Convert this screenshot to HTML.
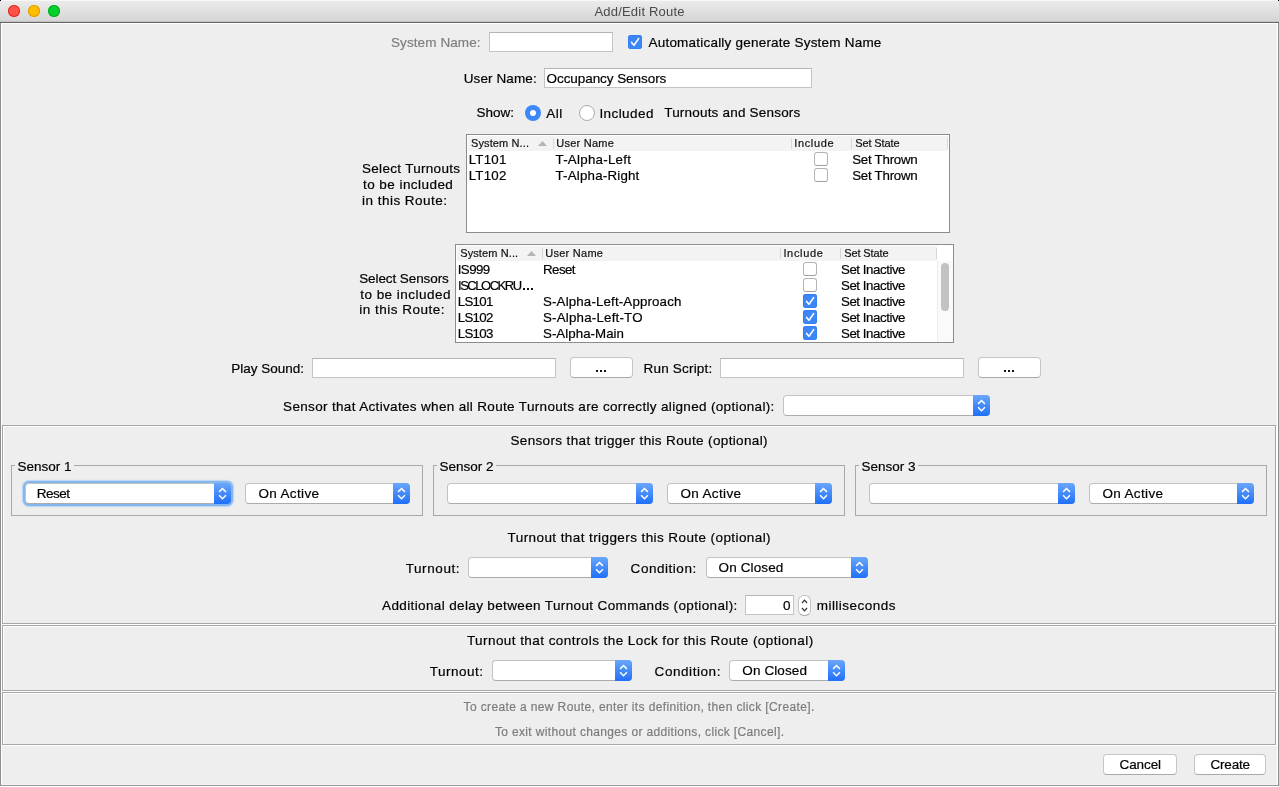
<!DOCTYPE html>
<html><head><meta charset="utf-8"><title>Add/Edit Route</title>
<style>
html,body{margin:0;padding:0;}
body{width:1279px;height:787px;overflow:hidden;background:#eeeeee;position:relative;font-family:"Liberation Sans",sans-serif;}
.t{position:absolute;white-space:pre;line-height:20px;-webkit-text-stroke:0.2px currentColor;}
</style></head><body>
<div style="position:absolute;left:0px;top:0px;width:1279px;height:22px;background:linear-gradient(#ececec,#d4d4d4);"></div>
<div style="position:absolute;left:0px;top:0px;width:1279px;height:1px;background:#f6f6f6;"></div>
<div style="position:absolute;left:0px;top:21px;width:1279px;height:1px;background:#c2c2c2;"></div>
<div style="position:absolute;left:0px;top:22px;width:1279px;height:1px;background:#666666;"></div>
<div style="position:absolute;left:0px;top:23px;width:1279px;height:1px;background:#ffffff;"></div>
<div style="position:absolute;left:0px;top:23px;width:1px;height:763px;background:#8e8e8e;"></div>
<div style="position:absolute;left:1px;top:23px;width:1px;height:762px;background:#ffffff;"></div>
<div style="position:absolute;left:1278px;top:23px;width:1px;height:763px;background:#8e8e8e;"></div>
<div style="position:absolute;left:1277px;top:23px;width:1px;height:762px;background:#ffffff;"></div>
<div style="position:absolute;left:0px;top:785px;width:1279px;height:1px;background:#979797;"></div>
<div style="position:absolute;left:1px;top:784px;width:1277px;height:1px;background:#f4f4f4;"></div>
<div style="position:absolute;left:0px;top:786px;width:1279px;height:1px;background:#ffffff;"></div>
<div style="position:absolute;left:0px;top:0px;width:1px;height:1px;background:#000;"></div>
<div style="position:absolute;left:1278px;top:0px;width:1px;height:1px;background:#000;"></div>
<div style="position:absolute;left:8px;top:5px;width:12px;height:12px;border-radius:50%;background:#ff5147;box-shadow:inset 0 0 0 1px #e2291f;"></div>
<div style="position:absolute;left:28px;top:5px;width:12px;height:12px;border-radius:50%;background:#ffbd00;box-shadow:inset 0 0 0 1px #e09d00;"></div>
<div style="position:absolute;left:48px;top:5px;width:12px;height:12px;border-radius:50%;background:#00cf2c;box-shadow:inset 0 0 0 1px #00ad22;"></div>
<div style="position:absolute;left:489px;top:32px;width:124px;height:20px;box-sizing:border-box;background:#fff;border:1px solid #c4c4c4;border-top-color:#b5b5b5;"></div>
<div style="position:absolute;left:628px;top:35px;width:14px;height:14px;border-radius:3px;background:#3c86f7;box-shadow:inset 0 0 0 0.5px #2f78ee;"></div>
<svg style="position:absolute;left:628px;top:35px" width="14" height="14" viewBox="0 0 14 14"><path d="M3.6 7.4 L6 10.2 L10.6 3.6" fill="none" stroke="#fff" stroke-width="1.6" stroke-linecap="round" stroke-linejoin="round"/></svg>
<div style="position:absolute;left:544px;top:68px;width:268px;height:20px;box-sizing:border-box;background:#fff;border:1px solid #c4c4c4;border-top-color:#b5b5b5;"></div>
<div style="position:absolute;left:525px;top:105px;width:16px;height:16px;border-radius:50%;background:#3d88f8;"></div>
<div style="position:absolute;left:530px;top:110px;width:6px;height:6px;border-radius:50%;background:#fff;"></div>
<div style="position:absolute;left:579px;top:105px;width:16px;height:16px;box-sizing:border-box;border-radius:50%;background:#fff;border:1px solid #acacac;"></div>
<div style="position:absolute;left:466px;top:134px;width:484px;height:99px;box-sizing:border-box;background:#fff;border:1px solid #8c8c8c;"></div>
<div style="position:absolute;left:468px;top:136px;width:480px;height:15px;background:#f3f3f3;"></div>
<div style="position:absolute;left:553px;top:138px;width:1px;height:11px;background:#d8d8d8;"></div>
<div style="position:absolute;left:791px;top:138px;width:1px;height:11px;background:#d8d8d8;"></div>
<div style="position:absolute;left:851px;top:138px;width:1px;height:11px;background:#d8d8d8;"></div>
<div style="position:absolute;left:947px;top:138px;width:1px;height:11px;background:#d8d8d8;"></div>
<svg style="position:absolute;left:537px;top:140px" width="11" height="7" viewBox="0 0 11 7"><path d="M1 6 L5.5 1 L10 6 Z" fill="#b4b4b4"/></svg>
<div style="position:absolute;left:814px;top:152px;width:14px;height:14px;box-sizing:border-box;border-radius:3px;background:#fff;border:1px solid #b4b4b4;border-bottom-color:#a0a0a0;"></div>
<div style="position:absolute;left:814px;top:168px;width:14px;height:14px;box-sizing:border-box;border-radius:3px;background:#fff;border:1px solid #b4b4b4;border-bottom-color:#a0a0a0;"></div>
<div style="position:absolute;left:455px;top:244px;width:499px;height:99px;box-sizing:border-box;background:#fff;border:1px solid #8c8c8c;"></div>
<div style="position:absolute;left:457px;top:246px;width:480px;height:15px;background:#f3f3f3;"></div>
<div style="position:absolute;left:542px;top:248px;width:1px;height:11px;background:#d8d8d8;"></div>
<div style="position:absolute;left:780px;top:248px;width:1px;height:11px;background:#d8d8d8;"></div>
<div style="position:absolute;left:840px;top:248px;width:1px;height:11px;background:#d8d8d8;"></div>
<div style="position:absolute;left:936px;top:248px;width:1px;height:11px;background:#d8d8d8;"></div>
<svg style="position:absolute;left:526px;top:250px" width="11" height="7" viewBox="0 0 11 7"><path d="M1 6 L5.5 1 L10 6 Z" fill="#b4b4b4"/></svg>
<div style="position:absolute;left:803px;top:262px;width:14px;height:14px;box-sizing:border-box;border-radius:3px;background:#fff;border:1px solid #b4b4b4;border-bottom-color:#a0a0a0;"></div>
<div style="position:absolute;left:523px;top:288px;width:2px;height:2px;background:#111;"></div>
<div style="position:absolute;left:527px;top:288px;width:2px;height:2px;background:#111;"></div>
<div style="position:absolute;left:531px;top:288px;width:2px;height:2px;background:#111;"></div>
<div style="position:absolute;left:803px;top:278px;width:14px;height:14px;box-sizing:border-box;border-radius:3px;background:#fff;border:1px solid #b4b4b4;border-bottom-color:#a0a0a0;"></div>
<div style="position:absolute;left:803px;top:294px;width:14px;height:14px;border-radius:3px;background:#3c86f7;box-shadow:inset 0 0 0 0.5px #2f78ee;"></div>
<svg style="position:absolute;left:803px;top:294px" width="14" height="14" viewBox="0 0 14 14"><path d="M3.6 7.4 L6 10.2 L10.6 3.6" fill="none" stroke="#fff" stroke-width="1.6" stroke-linecap="round" stroke-linejoin="round"/></svg>
<div style="position:absolute;left:803px;top:310px;width:14px;height:14px;border-radius:3px;background:#3c86f7;box-shadow:inset 0 0 0 0.5px #2f78ee;"></div>
<svg style="position:absolute;left:803px;top:310px" width="14" height="14" viewBox="0 0 14 14"><path d="M3.6 7.4 L6 10.2 L10.6 3.6" fill="none" stroke="#fff" stroke-width="1.6" stroke-linecap="round" stroke-linejoin="round"/></svg>
<div style="position:absolute;left:803px;top:326px;width:14px;height:14px;border-radius:3px;background:#3c86f7;box-shadow:inset 0 0 0 0.5px #2f78ee;"></div>
<svg style="position:absolute;left:803px;top:326px" width="14" height="14" viewBox="0 0 14 14"><path d="M3.6 7.4 L6 10.2 L10.6 3.6" fill="none" stroke="#fff" stroke-width="1.6" stroke-linecap="round" stroke-linejoin="round"/></svg>
<div style="position:absolute;left:937px;top:261px;width:1px;height:81px;background:#ececec;"></div>
<div style="position:absolute;left:938px;top:261px;width:15px;height:81px;background:#fafafa;"></div>
<div style="position:absolute;left:941px;top:263px;width:8px;height:48px;border-radius:4px;background:#c2c2c2;"></div>
<div style="position:absolute;left:312px;top:358px;width:244px;height:20px;box-sizing:border-box;background:#fff;border:1px solid #c4c4c4;border-top-color:#b5b5b5;"></div>
<div style="position:absolute;left:570px;top:357px;width:63px;height:21px;box-sizing:border-box;border-radius:4px;background:#fff;border:1px solid #c6c6c6;border-bottom-color:#a9a9a9;"></div>
<div style="position:absolute;left:596px;top:370px;width:2px;height:2px;background:#111;"></div>
<div style="position:absolute;left:600px;top:370px;width:2px;height:2px;background:#111;"></div>
<div style="position:absolute;left:604px;top:370px;width:2px;height:2px;background:#111;"></div>
<div style="position:absolute;left:720px;top:358px;width:244px;height:20px;box-sizing:border-box;background:#fff;border:1px solid #c4c4c4;border-top-color:#b5b5b5;"></div>
<div style="position:absolute;left:978px;top:357px;width:63px;height:21px;box-sizing:border-box;border-radius:4px;background:#fff;border:1px solid #c6c6c6;border-bottom-color:#a9a9a9;"></div>
<div style="position:absolute;left:1004px;top:370px;width:2px;height:2px;background:#111;"></div>
<div style="position:absolute;left:1008px;top:370px;width:2px;height:2px;background:#111;"></div>
<div style="position:absolute;left:1012px;top:370px;width:2px;height:2px;background:#111;"></div>
<div style="position:absolute;left:783px;top:395px;width:207px;height:21px;box-sizing:border-box;border-radius:4px;background:#fff;border:1px solid #c2c2c2;border-bottom-color:#acacac;"></div>
<div style="position:absolute;left:973px;top:395px;width:17px;height:21px;border-radius:0 4px 4px 0;background:linear-gradient(#6aa7fb,#1f6ff9);"></div>
<svg style="position:absolute;left:973px;top:395px" width="17" height="21" viewBox="0 0 17 21"><path d="M5.1 8.9 L8.5 5.5 L11.9 8.9 M5.1 12.3 L8.5 15.7 L11.9 12.3" fill="none" stroke="#fff" stroke-width="1.5"/></svg>
<div style="position:absolute;left:3px;top:426px;width:1274px;height:199px;box-sizing:border-box;border:1px solid #fff;"></div>
<div style="position:absolute;left:2px;top:425px;width:1274px;height:199px;box-sizing:border-box;border:1px solid #a6a6a6;"></div>
<div style="position:absolute;left:11px;top:465px;width:412px;height:51px;box-sizing:border-box;border:1px solid #a9a9a9;"></div>
<div style="position:absolute;left:15px;top:460px;width:59px;height:10px;background:#eeeeee;"></div>
<div style="position:absolute;left:25px;top:483px;width:206px;height:21px;box-sizing:border-box;border-radius:4px;background:#fff;border:1px solid #c2c2c2;border-bottom-color:#acacac;box-shadow:0 0 0 2px #86b6ee,0 0 1px 2.5px #b9d5f5;"></div>
<div style="position:absolute;left:214px;top:483px;width:17px;height:21px;border-radius:0 4px 4px 0;background:linear-gradient(#6aa7fb,#1f6ff9);"></div>
<svg style="position:absolute;left:214px;top:483px" width="17" height="21" viewBox="0 0 17 21"><path d="M5.1 8.9 L8.5 5.5 L11.9 8.9 M5.1 12.3 L8.5 15.7 L11.9 12.3" fill="none" stroke="#fff" stroke-width="1.5"/></svg>
<div style="position:absolute;left:245px;top:483px;width:165px;height:21px;box-sizing:border-box;border-radius:4px;background:#fff;border:1px solid #c2c2c2;border-bottom-color:#acacac;"></div>
<div style="position:absolute;left:393px;top:483px;width:17px;height:21px;border-radius:0 4px 4px 0;background:linear-gradient(#6aa7fb,#1f6ff9);"></div>
<svg style="position:absolute;left:393px;top:483px" width="17" height="21" viewBox="0 0 17 21"><path d="M5.1 8.9 L8.5 5.5 L11.9 8.9 M5.1 12.3 L8.5 15.7 L11.9 12.3" fill="none" stroke="#fff" stroke-width="1.5"/></svg>
<div style="position:absolute;left:433px;top:465px;width:412px;height:51px;box-sizing:border-box;border:1px solid #a9a9a9;"></div>
<div style="position:absolute;left:437px;top:460px;width:59px;height:10px;background:#eeeeee;"></div>
<div style="position:absolute;left:447px;top:483px;width:206px;height:21px;box-sizing:border-box;border-radius:4px;background:#fff;border:1px solid #c2c2c2;border-bottom-color:#acacac;"></div>
<div style="position:absolute;left:636px;top:483px;width:17px;height:21px;border-radius:0 4px 4px 0;background:linear-gradient(#6aa7fb,#1f6ff9);"></div>
<svg style="position:absolute;left:636px;top:483px" width="17" height="21" viewBox="0 0 17 21"><path d="M5.1 8.9 L8.5 5.5 L11.9 8.9 M5.1 12.3 L8.5 15.7 L11.9 12.3" fill="none" stroke="#fff" stroke-width="1.5"/></svg>
<div style="position:absolute;left:667px;top:483px;width:165px;height:21px;box-sizing:border-box;border-radius:4px;background:#fff;border:1px solid #c2c2c2;border-bottom-color:#acacac;"></div>
<div style="position:absolute;left:815px;top:483px;width:17px;height:21px;border-radius:0 4px 4px 0;background:linear-gradient(#6aa7fb,#1f6ff9);"></div>
<svg style="position:absolute;left:815px;top:483px" width="17" height="21" viewBox="0 0 17 21"><path d="M5.1 8.9 L8.5 5.5 L11.9 8.9 M5.1 12.3 L8.5 15.7 L11.9 12.3" fill="none" stroke="#fff" stroke-width="1.5"/></svg>
<div style="position:absolute;left:855px;top:465px;width:412px;height:51px;box-sizing:border-box;border:1px solid #a9a9a9;"></div>
<div style="position:absolute;left:859px;top:460px;width:59px;height:10px;background:#eeeeee;"></div>
<div style="position:absolute;left:869px;top:483px;width:206px;height:21px;box-sizing:border-box;border-radius:4px;background:#fff;border:1px solid #c2c2c2;border-bottom-color:#acacac;"></div>
<div style="position:absolute;left:1058px;top:483px;width:17px;height:21px;border-radius:0 4px 4px 0;background:linear-gradient(#6aa7fb,#1f6ff9);"></div>
<svg style="position:absolute;left:1058px;top:483px" width="17" height="21" viewBox="0 0 17 21"><path d="M5.1 8.9 L8.5 5.5 L11.9 8.9 M5.1 12.3 L8.5 15.7 L11.9 12.3" fill="none" stroke="#fff" stroke-width="1.5"/></svg>
<div style="position:absolute;left:1089px;top:483px;width:165px;height:21px;box-sizing:border-box;border-radius:4px;background:#fff;border:1px solid #c2c2c2;border-bottom-color:#acacac;"></div>
<div style="position:absolute;left:1237px;top:483px;width:17px;height:21px;border-radius:0 4px 4px 0;background:linear-gradient(#6aa7fb,#1f6ff9);"></div>
<svg style="position:absolute;left:1237px;top:483px" width="17" height="21" viewBox="0 0 17 21"><path d="M5.1 8.9 L8.5 5.5 L11.9 8.9 M5.1 12.3 L8.5 15.7 L11.9 12.3" fill="none" stroke="#fff" stroke-width="1.5"/></svg>
<div style="position:absolute;left:468px;top:557px;width:140px;height:21px;box-sizing:border-box;border-radius:4px;background:#fff;border:1px solid #c2c2c2;border-bottom-color:#acacac;"></div>
<div style="position:absolute;left:591px;top:557px;width:17px;height:21px;border-radius:0 4px 4px 0;background:linear-gradient(#6aa7fb,#1f6ff9);"></div>
<svg style="position:absolute;left:591px;top:557px" width="17" height="21" viewBox="0 0 17 21"><path d="M5.1 8.9 L8.5 5.5 L11.9 8.9 M5.1 12.3 L8.5 15.7 L11.9 12.3" fill="none" stroke="#fff" stroke-width="1.5"/></svg>
<div style="position:absolute;left:706px;top:557px;width:162px;height:21px;box-sizing:border-box;border-radius:4px;background:#fff;border:1px solid #c2c2c2;border-bottom-color:#acacac;"></div>
<div style="position:absolute;left:851px;top:557px;width:17px;height:21px;border-radius:0 4px 4px 0;background:linear-gradient(#6aa7fb,#1f6ff9);"></div>
<svg style="position:absolute;left:851px;top:557px" width="17" height="21" viewBox="0 0 17 21"><path d="M5.1 8.9 L8.5 5.5 L11.9 8.9 M5.1 12.3 L8.5 15.7 L11.9 12.3" fill="none" stroke="#fff" stroke-width="1.5"/></svg>
<div style="position:absolute;left:745px;top:595px;width:49px;height:20px;box-sizing:border-box;background:#fff;border:1px solid #c4c4c4;border-top-color:#b5b5b5;"></div>
<div style="position:absolute;left:798px;top:595px;width:13px;height:21px;box-sizing:border-box;border-radius:6px;background:#fff;border:1px solid #c4c4c4;border-bottom-color:#a9a9a9;"></div>
<svg style="position:absolute;left:798px;top:595px" width="13" height="21" viewBox="0 0 13 21"><path d="M4 8 L6.5 5.2 L9 8 M4 13 L6.5 15.8 L9 13" fill="none" stroke="#333" stroke-width="1.2"/></svg>
<div style="position:absolute;left:3px;top:626px;width:1274px;height:66px;box-sizing:border-box;border:1px solid #fff;"></div>
<div style="position:absolute;left:2px;top:625px;width:1274px;height:66px;box-sizing:border-box;border:1px solid #a6a6a6;"></div>
<div style="position:absolute;left:492px;top:660px;width:140px;height:21px;box-sizing:border-box;border-radius:4px;background:#fff;border:1px solid #c2c2c2;border-bottom-color:#acacac;"></div>
<div style="position:absolute;left:615px;top:660px;width:17px;height:21px;border-radius:0 4px 4px 0;background:linear-gradient(#6aa7fb,#1f6ff9);"></div>
<svg style="position:absolute;left:615px;top:660px" width="17" height="21" viewBox="0 0 17 21"><path d="M5.1 8.9 L8.5 5.5 L11.9 8.9 M5.1 12.3 L8.5 15.7 L11.9 12.3" fill="none" stroke="#fff" stroke-width="1.5"/></svg>
<div style="position:absolute;left:729px;top:660px;width:116px;height:21px;box-sizing:border-box;border-radius:4px;background:#fff;border:1px solid #c2c2c2;border-bottom-color:#acacac;"></div>
<div style="position:absolute;left:828px;top:660px;width:17px;height:21px;border-radius:0 4px 4px 0;background:linear-gradient(#6aa7fb,#1f6ff9);"></div>
<svg style="position:absolute;left:828px;top:660px" width="17" height="21" viewBox="0 0 17 21"><path d="M5.1 8.9 L8.5 5.5 L11.9 8.9 M5.1 12.3 L8.5 15.7 L11.9 12.3" fill="none" stroke="#fff" stroke-width="1.5"/></svg>
<div style="position:absolute;left:3px;top:693px;width:1274px;height:53px;box-sizing:border-box;border:1px solid #fff;"></div>
<div style="position:absolute;left:2px;top:692px;width:1274px;height:53px;box-sizing:border-box;border:1px solid #a6a6a6;"></div>
<div style="position:absolute;left:1103px;top:754px;width:74px;height:21px;box-sizing:border-box;border-radius:4px;background:#fff;border:1px solid #c6c6c6;border-bottom-color:#a9a9a9;"></div>
<div style="position:absolute;left:1194px;top:754px;width:72px;height:21px;box-sizing:border-box;border-radius:4px;background:#fff;border:1px solid #c6c6c6;border-bottom-color:#a9a9a9;"></div>
<div style="position:absolute;left:0;top:0;width:1279px;height:787px;will-change:transform;">
<div class="t" style="left:594.50px;top:1.50px;font-size:13px;color:#4a4a4a;letter-spacing:0.192px;-webkit-text-stroke:0;">Add/Edit Route</div>
<div class="t" style="left:391.00px;top:33.00px;font-size:13.5px;color:#7f7f7f;letter-spacing:0.091px;">System Name:</div>
<div class="t" style="left:648.50px;top:33.40px;font-size:13.5px;color:#000;letter-spacing:0.212px;">Automatically generate System Name</div>
<div class="t" style="left:463.70px;top:69.00px;font-size:13.5px;color:#000;letter-spacing:0.111px;">User Name:</div>
<div class="t" style="left:546.50px;top:69.00px;font-size:13.5px;color:#000;letter-spacing:-0.062px;">Occupancy Sensors</div>
<div class="t" style="left:476.40px;top:103.00px;font-size:13.5px;color:#000;">Show:</div>
<div class="t" style="left:546.25px;top:103.80px;font-size:13.5px;color:#000;letter-spacing:0.550px;">All</div>
<div class="t" style="left:599.40px;top:103.50px;font-size:13.5px;color:#000;letter-spacing:0.429px;">Included</div>
<div class="t" style="left:664.20px;top:102.70px;font-size:13.5px;color:#000;letter-spacing:0.200px;">Turnouts and Sensors</div>
<div class="t" style="left:471.00px;top:133.00px;font-size:11px;color:#111;letter-spacing:0.110px;">System N...</div>
<div class="t" style="left:556.25px;top:133.00px;font-size:11px;color:#111;letter-spacing:0.250px;">User Name</div>
<div class="t" style="left:794.20px;top:133.00px;font-size:11px;color:#111;letter-spacing:0.667px;">Include</div>
<div class="t" style="left:855.30px;top:133.00px;font-size:11px;color:#111;letter-spacing:-0.125px;">Set State</div>
<div class="t" style="left:468.70px;top:149.75px;font-size:13.3px;color:#000;letter-spacing:0.250px;">LT101</div>
<div class="t" style="left:555.50px;top:149.75px;font-size:13.3px;color:#000;letter-spacing:0.273px;">T-Alpha-Left</div>
<div class="t" style="left:852.20px;top:149.75px;font-size:13.3px;color:#000;letter-spacing:-0.244px;">Set Thrown</div>
<div class="t" style="left:468.70px;top:165.75px;font-size:13.3px;color:#000;letter-spacing:0.250px;">LT102</div>
<div class="t" style="left:555.50px;top:165.75px;font-size:13.3px;color:#000;letter-spacing:0.208px;">T-Alpha-Right</div>
<div class="t" style="left:852.20px;top:165.75px;font-size:13.3px;color:#000;letter-spacing:-0.244px;">Set Thrown</div>
<div class="t" style="left:362.00px;top:158.50px;font-size:13.5px;color:#000;letter-spacing:0.300px;">Select Turnouts</div>
<div class="t" style="left:363.00px;top:174.60px;font-size:13.5px;color:#000;letter-spacing:0.446px;">to be included</div>
<div class="t" style="left:362.00px;top:190.70px;font-size:13.5px;color:#000;letter-spacing:0.477px;">in this Route:</div>
<div class="t" style="left:460.20px;top:243.00px;font-size:11px;color:#111;letter-spacing:0.110px;">System N...</div>
<div class="t" style="left:545.30px;top:243.00px;font-size:11px;color:#111;letter-spacing:0.250px;">User Name</div>
<div class="t" style="left:783.40px;top:243.00px;font-size:11px;color:#111;letter-spacing:0.667px;">Include</div>
<div class="t" style="left:844.30px;top:243.00px;font-size:11px;color:#111;letter-spacing:-0.125px;">Set State</div>
<div class="t" style="left:457.70px;top:259.75px;font-size:13.3px;color:#000;letter-spacing:-0.550px;">IS999</div>
<div class="t" style="left:543.00px;top:259.75px;font-size:13.3px;color:#000;letter-spacing:-0.550px;">Reset</div>
<div class="t" style="left:841.00px;top:259.75px;font-size:13.3px;color:#000;letter-spacing:-0.455px;">Set Inactive</div>
<div class="t" style="left:458.00px;top:275.75px;font-size:13px;color:#000;letter-spacing:-1.475px;">ISCLOCKRU</div>
<div class="t" style="left:841.00px;top:275.75px;font-size:13.3px;color:#000;letter-spacing:-0.455px;">Set Inactive</div>
<div class="t" style="left:457.70px;top:291.75px;font-size:13.3px;color:#000;letter-spacing:-0.700px;">LS101</div>
<div class="t" style="left:543.00px;top:291.75px;font-size:13.3px;color:#000;letter-spacing:0.155px;">S-Alpha-Left-Approach</div>
<div class="t" style="left:841.00px;top:291.75px;font-size:13.3px;color:#000;letter-spacing:-0.455px;">Set Inactive</div>
<div class="t" style="left:457.70px;top:307.75px;font-size:13.3px;color:#000;letter-spacing:-0.675px;">LS102</div>
<div class="t" style="left:543.00px;top:307.75px;font-size:13.3px;color:#000;letter-spacing:0.214px;">S-Alpha-Left-TO</div>
<div class="t" style="left:841.00px;top:307.75px;font-size:13.3px;color:#000;letter-spacing:-0.455px;">Set Inactive</div>
<div class="t" style="left:457.70px;top:323.75px;font-size:13.3px;color:#000;letter-spacing:-0.675px;">LS103</div>
<div class="t" style="left:543.00px;top:323.75px;font-size:13.3px;color:#000;letter-spacing:0.036px;">S-Alpha-Main</div>
<div class="t" style="left:841.00px;top:323.75px;font-size:13.3px;color:#000;letter-spacing:-0.455px;">Set Inactive</div>
<div class="t" style="left:359.20px;top:268.50px;font-size:13.5px;color:#000;letter-spacing:-0.092px;">Select Sensors</div>
<div class="t" style="left:360.20px;top:284.60px;font-size:13.5px;color:#000;letter-spacing:0.477px;">to be included</div>
<div class="t" style="left:359.20px;top:300.30px;font-size:13.5px;color:#000;letter-spacing:0.508px;">in this Route:</div>
<div class="t" style="left:231.30px;top:359.00px;font-size:13.5px;color:#000;">Play Sound:</div>
<div class="t" style="left:643.50px;top:359.00px;font-size:13.5px;color:#000;letter-spacing:0.200px;">Run Script:</div>
<div class="t" style="left:283.10px;top:396.60px;font-size:13.5px;color:#000;letter-spacing:0.333px;">Sensor that Activates when all Route Turnouts are correctly aligned (optional):</div>
<div class="t" style="left:510.40px;top:431.00px;font-size:13.5px;color:#000;letter-spacing:0.361px;">Sensors that trigger this Route (optional)</div>
<div class="t" style="left:17.40px;top:456.70px;font-size:13.5px;color:#000;letter-spacing:0.014px;">Sensor 1</div>
<div class="t" style="left:258.40px;top:484.00px;font-size:13.5px;color:#000;letter-spacing:0.362px;">On Active</div>
<div class="t" style="left:439.40px;top:456.70px;font-size:13.5px;color:#000;letter-spacing:0.014px;">Sensor 2</div>
<div class="t" style="left:680.40px;top:484.00px;font-size:13.5px;color:#000;letter-spacing:0.362px;">On Active</div>
<div class="t" style="left:861.40px;top:456.70px;font-size:13.5px;color:#000;letter-spacing:0.014px;">Sensor 3</div>
<div class="t" style="left:1102.40px;top:484.00px;font-size:13.5px;color:#000;letter-spacing:0.362px;">On Active</div>
<div class="t" style="left:36.80px;top:483.80px;font-size:13.5px;color:#000;letter-spacing:-0.500px;">Reset</div>
<div class="t" style="left:507.60px;top:528.00px;font-size:13.5px;color:#000;letter-spacing:0.414px;">Turnout that triggers this Route (optional)</div>
<div class="t" style="left:405.70px;top:558.80px;font-size:13.5px;color:#000;letter-spacing:0.586px;">Turnout:</div>
<div class="t" style="left:630.60px;top:558.80px;font-size:13.5px;color:#000;letter-spacing:0.533px;">Condition:</div>
<div class="t" style="left:718.60px;top:558.00px;font-size:13.5px;color:#000;letter-spacing:0.125px;">On Closed</div>
<div class="t" style="left:382.10px;top:595.70px;font-size:13.5px;color:#000;letter-spacing:0.365px;">Additional delay between Turnout Commands (optional):</div>
<div class="t" style="left:783.00px;top:595.70px;font-size:13.5px;color:#000;">0</div>
<div class="t" style="left:816.70px;top:595.70px;font-size:13.5px;color:#000;letter-spacing:0.473px;">milliseconds</div>
<div class="t" style="left:466.90px;top:631.00px;font-size:13.5px;color:#000;letter-spacing:0.438px;">Turnout that controls the Lock for this Route (optional)</div>
<div class="t" style="left:429.75px;top:661.80px;font-size:13.5px;color:#000;letter-spacing:0.500px;">Turnout:</div>
<div class="t" style="left:654.60px;top:661.80px;font-size:13.5px;color:#000;letter-spacing:0.556px;">Condition:</div>
<div class="t" style="left:742.30px;top:661.00px;font-size:13.5px;color:#000;letter-spacing:0.112px;">On Closed</div>
<div class="t" style="left:463.60px;top:696.60px;font-size:12px;color:#7c7c7c;letter-spacing:0.373px;">To create a new Route, enter its definition, then click [Create].</div>
<div class="t" style="left:494.90px;top:721.70px;font-size:12px;color:#7c7c7c;letter-spacing:0.352px;">To exit without changes or additions, click [Cancel].</div>
<div class="t" style="left:1119.60px;top:755.00px;font-size:13.5px;color:#000;letter-spacing:-0.120px;">Cancel</div>
<div class="t" style="left:1210.40px;top:755.00px;font-size:13.5px;color:#000;letter-spacing:-0.160px;">Create</div>
</div>
</body></html>
